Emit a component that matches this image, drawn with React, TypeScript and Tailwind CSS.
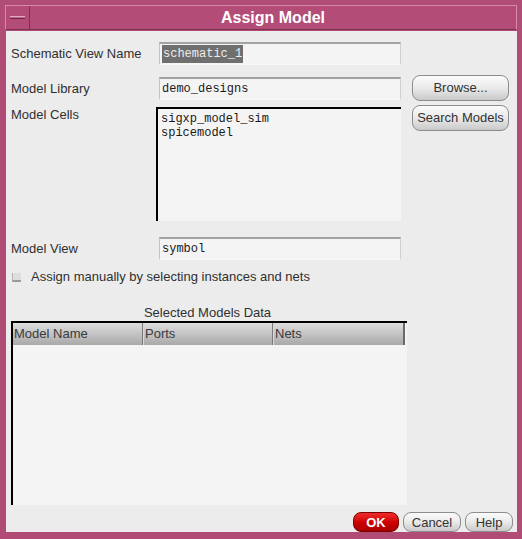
import React from "react";

const sans = "font-['Liberation_Sans',Arial,sans-serif]";
const mono = "font-['Liberation_Mono','Courier_New',monospace]";

const Label: React.FC<{ text: string; width?: string }> = ({ text, width = "w-[148px]" }) => (
  <div className={`${width} shrink-0 text-[13px] leading-[16px] text-[#303030] ${sans}`}>{text}</div>
);

const Field: React.FC<{ children: React.ReactNode }> = ({ children }) => (
  <div
    className={`flex h-[23px] w-[242px] items-center border-t-2 border-l border-b border-r border-t-[#a2a2a2] border-l-[#c4c4c4] border-b-[#f8f8f8] border-r-[#cfcfcf] bg-[#f4f4f4] pl-[2px] text-[12px] text-[#1a1a1a] ${mono}`}
  >
    {children}
  </div>
);

const Btn: React.FC<{ text: string; w: string; h?: string }> = ({ text, w, h = "h-[26px]" }) => (
  <button
    className={`${w} ${h} rounded-[8px] border border-[#8c8c8c] bg-gradient-to-b from-[#fbfbfb] via-[#eaeaea] to-[#c9c9c9] text-[13px] text-[#333] ${sans}`}
  >
    {text}
  </button>
);

export default function App() {
  return (
    <div className="flex h-[539px] w-[522px] flex-col border-t-[5px] border-x-[5px] border-b-[8px] border-[#b14c77] bg-[#b14c77] outline outline-1 outline-[#8e3a5e]">
      {/* title bar */}
      <div className="flex h-[25px] shrink-0 border border-[#d98aab] border-b-[#7f2f51] bg-[#b34d78]">
        <div className="flex w-[24px] items-center justify-center border-r border-r-[#7f2f51]">
          <div className="h-[3px] w-[15px] border-t border-t-[#e4a6c0] border-b border-b-[#6f2646] bg-[#c36a90]" />
        </div>
        <div className={`flex flex-1 items-center justify-center text-[16px] font-bold text-white ${sans}`}>
          Assign Model
        </div>
      </div>

      {/* content */}
      <div className="ml-px mt-px flex flex-1 flex-col bg-[#ececec]">
        <div className="flex h-[481px]">
          <div className="flex w-[398px] flex-col pl-[5px]">
            <div className="mt-[11px] flex h-[23px] items-center">
              <Label text="Schematic View Name" />
              <Field>
                <span className="bg-[#6f6f6f] px-px text-[#ececec]">schematic_1</span>
              </Field>
            </div>
            <div className="mt-[12px] flex h-[23px] items-center">
              <Label text="Model Library" />
              <Field>demo_designs</Field>
            </div>
            <div className="mt-[7px] flex h-[114px]">
              <Label text="Model Cells" width="w-[145px]" />
              <div
                className={`h-[114px] w-[245px] border-t-2 border-l-2 border-black bg-[#f4f4f4] pl-[3px] pt-[3px] text-[12px] leading-[14px] text-[#1a1a1a] ${mono}`}
              >
                <div>sigxp_model_sim</div>
                <div>spicemodel</div>
              </div>
            </div>
            <div className="mt-[16px] flex h-[23px] items-center">
              <Label text="Model View" />
              <Field>symbol</Field>
            </div>
            <div className="mt-[9px] flex h-[16px] items-center">
              <div className="ml-px mr-[10px] h-[9px] w-[9px] border-b-2 border-l border-b-[#9a9a9a] border-l-[#b4b4b4] bg-[#dedede]" />
              <span className={`text-[13px] text-[#303030] ${sans}`}>
                Assign manually by selecting instances and nets
              </span>
            </div>
            <div className={`mt-[20px] h-[16px] w-[393px] text-center text-[13px] leading-[16px] text-[#303030] ${sans}`}>
              Selected Models Data
            </div>
            <div className="flex h-[184px] w-[396px] flex-col border-t-2 border-l-2 border-black bg-[#f4f4f4]">
              <div className={`flex h-[22px] w-[392px] border-r-2 border-r-[#6a6a6a] bg-gradient-to-b from-[#dedede] to-[#a9a9a9] text-[13px] text-[#3a3a3a] ${sans}`}>
                <div className="flex w-[130px] items-center border-r border-r-[#7a7a7a] pl-[1px]">Model Name</div>
                <div className="flex w-[130px] items-center border-l border-r border-l-[#d8d8d8] border-r-[#7a7a7a] pl-[1px]">Ports</div>
                <div className="flex flex-1 items-center border-l border-l-[#d8d8d8] pl-[1px]">Nets</div>
              </div>
            </div>
          </div>
          <div className="ml-[8px] flex flex-col">
            <div className="mt-[43px]">
              <Btn text="Browse..." w="w-[97px]" />
            </div>
            <div className="mt-[3px]">
              <Btn text="Search Models" w="w-[97px]" />
            </div>
          </div>
        </div>
        <div className="flex h-[20px] justify-end gap-[4px] pr-[4px]">
          <button
            className={`h-[20px] w-[46px] rounded-[8px] border border-[#7a0000] bg-gradient-to-b from-[#ee2a2a] via-[#d00000] to-[#a80000] text-[13px] font-bold text-white ${sans}`}
          >
            OK
          </button>
          <Btn text="Cancel" w="w-[58px]" h="h-[20px]" />
          <Btn text="Help" w="w-[48px]" h="h-[20px]" />
        </div>
      </div>
    </div>
  );
}
